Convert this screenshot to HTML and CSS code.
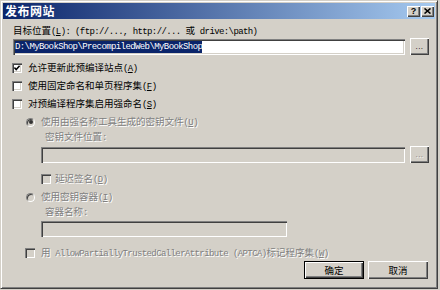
FILE: index.html
```html
<!DOCTYPE html>
<html lang="zh-CN">
<head>
<meta charset="utf-8">
<title>发布网站</title>
<link rel="stylesheet" href="styles.css">
</head>
<body>
<div class="window">
  <div class="titlebar">
    <span class="title">发布网站</span>
    <div class="tbtns">
      <span class="tbtn q">?</span>
      <span class="tbtn"><svg width="7" height="6" viewBox="0 0 7 6"><path d="M0.5 0.5 L6.5 5.5 M6.5 0.5 L0.5 5.5" stroke="#000" stroke-width="1.6" fill="none"/></svg></span>
    </div>
  </div>
  <div class="content">
    <div class="lbl">目标位置<span class="en">(<u>L</u>): (ftp://..., http://... </span>或<span class="en"> drive:\path)</span></div>
    <div class="frow">
      <div class="field"><span class="sel en">D:\MyBookShop\PrecompiledWeb\MyBookShop</span></div>
      <span class="dots">...</span>
    </div>
    <div class="chk">
      <span class="cb"><svg width="6" height="6" viewBox="0 0 6 6"><path d="M0.4 2.6 L2.2 4.6 L5.6 0.8" stroke="#000" stroke-width="1.5" fill="none"/></svg></span>
      <span>允许更新此预编译站点<span class="en">(<u>A</u>)</span></span>
    </div>
    <div class="chk">
      <span class="cb"></span>
      <span>使用固定命名和单页程序集<span class="en">(<u>F</u>)</span></span>
    </div>
    <div class="chk">
      <span class="cb"></span>
      <span>对预编译程序集启用强命名<span class="en">(<u>S</u>)</span></span>
    </div>
    <div class="chk radio-row">
      <span class="rb on"></span>
      <span class="dis">使用由强名称工具生成的密钥文件<span class="en">(<u>U</u>)</span></span>
    </div>
    <div class="sub dis">密钥文件位置<span class="en">:</span></div>
    <div class="frow indent">
      <div class="field off"></div>
      <span class="dots off">...</span>
    </div>
    <div class="chk delay">
      <span class="cb off"></span>
      <span class="dis">延迟签名<span class="en">(<u>D</u>)</span></span>
    </div>
    <div class="chk radio-row">
      <span class="rb"></span>
      <span class="dis">使用密钥容器<span class="en">(<u>I</u>)</span></span>
    </div>
    <div class="sub short dis">容器名称<span class="en">:</span></div>
    <div class="field off short-field"></div>
    <div class="chk last">
      <span class="cb off"></span>
      <span class="dis">用<span class="en"> AllowPartiallyTrustedCallerAttribute (APTCA)</span>标记程序集<span class="en">(<u>W</u>)</span></span>
    </div>
    <div class="actions">
      <span class="btn default">确定</span>
      <span class="btn">取消</span>
    </div>
  </div>
</div>
</body>
</html>
```
FILE: styles.css
```css
* { box-sizing: border-box; }
html, body { margin: 0; padding: 0; }
body {
  width: 440px;
  height: 290px;
  overflow: hidden;
  background: #d4d0c8;
  font-family: "Noto Sans CJK SC", "Noto Sans CJK JP", sans-serif;
  font-size: 9.5px;
  color: #000;
}
.window {
  width: 438px;
  height: 289px;
  background: #d4d0c8;
  border: 1px solid;
  border-color: #d4d0c8 #404040 #404040 #d4d0c8;
  box-shadow: inset 1px 1px #fff, inset -1px -1px #808080;
  padding: 2px;
  display: flex;
  flex-direction: column;
}
.titlebar {
  height: 16px;
  flex: none;
  display: flex;
  align-items: center;
  padding: 0 1px 0 2px;
  background: linear-gradient(to right, #0a246a, #a6caf0);
}
.title {
  color: #fff;
  font-weight: bold;
  font-size: 12px;
  letter-spacing: 0.5px;
  line-height: 16px;
}
.tbtns {
  margin-left: auto;
  display: flex;
  gap: 1px;
}
.tbtn {
  width: 13px;
  height: 11px;
  background: #d4d0c8;
  box-shadow: inset 1px 1px #fff, inset -1px -1px #404040, inset -2px -2px #808080;
  display: flex;
  align-items: center;
  justify-content: center;
}
.tbtn.q {
  font-family: "Liberation Sans", sans-serif;
  font-weight: bold;
  font-size: 9px;
  line-height: 11px;
}
.content {
  flex: 1;
  padding: 5px 6px 0 10px;
  display: flex;
  flex-direction: column;
}
.en {
  font-family: "Liberation Mono", monospace;
  font-size: 9px;
  letter-spacing: -0.6px;
}
u { text-decoration: underline; text-underline-offset: 1px; }
.lbl {
  height: 12px;
  line-height: 12px;
  white-space: nowrap;
}
.frow {
  display: flex;
  align-items: flex-end;
  gap: 5px;
  height: 17px;
  margin-top: 2px;
}
.frow.indent {
  margin-top: 4px;
  padding-left: 28px;
}
.field {
  flex: 1;
  height: 16px;
  background: #fff;
  padding: 2px 2px;
  box-shadow: inset 1px 1px #808080, inset 2px 2px #404040, inset -1px -1px #fff, inset -2px -2px #d4d0c8;
  display: flex;
  align-items: center;
  overflow: hidden;
}
.field.off { background: #d4d0c8; }
.sel {
  background: #0a246a;
  color: #fff;
  height: 12px;
  line-height: 12px;
  white-space: nowrap;
}
.dots {
  flex: none;
  width: 19px;
  height: 17px;
  background: #d4d0c8;
  box-shadow: inset 1px 1px #fff, inset -1px -1px #404040, inset -2px -2px #808080;
  font-family: "Liberation Sans", sans-serif;
  font-size: 8px;
  line-height: 18px;
  text-align: center;
  letter-spacing: 0.5px;
}
.dots.off {
  color: #808080;
  text-shadow: 1px 1px #fff;
}
.chk {
  height: 18px;
  display: flex;
  align-items: center;
  gap: 6px;
  white-space: nowrap;
  line-height: 12px;
}
.frow + .chk { margin-top: 4px; }
.cb {
  flex: none;
  width: 10px;
  height: 10px;
  margin-left: -1px;
  background: #fff;
  box-shadow: inset 1px 1px #808080, inset 2px 2px #404040, inset -1px -1px #fff, inset -2px -2px #d4d0c8;
  display: flex;
  align-items: center;
  justify-content: center;
}
.cb.off { background: #d4d0c8; }
.radio-row { padding-left: 13px; }
.rb {
  flex: none;
  width: 9px;
  height: 9px;
  border-radius: 50%;
  border: 1px solid;
  border-color: #808080 #fff #fff #808080;
  background: #d4d0c8;
  box-shadow: inset 1px 1px #404040;
  display: flex;
  align-items: center;
  justify-content: center;
}
.rb.on::after {
  content: "";
  width: 4px;
  height: 4px;
  border-radius: 50%;
  background: #333;
}
.dis {
  color: #808080;
  text-shadow: 1px 1px #fff;
}
.sub {
  height: 11px;
  line-height: 11px;
  padding-left: 32px;
  white-space: nowrap;
}
.sub.short { height: 10px; line-height: 10px; }
.frow.indent + .chk.delay { margin-top: 7px; }
.chk.delay { padding-left: 29px; gap: 4px; }
.short-field {
  flex: none;
  width: 246px;
  margin-left: 28px;
  margin-top: 5px;
}
.chk.last {
  height: 14px;
  margin-top: 9px;
  padding-left: 13px;
}
.actions {
  display: flex;
  justify-content: flex-end;
  gap: 4px;
  margin-top: 1px;
  padding-right: 1px;
}
.btn {
  width: 60px;
  height: 18px;
  background: #d4d0c8;
  box-shadow: inset 1px 1px #fff, inset -1px -1px #404040, inset -2px -2px #808080;
  display: flex;
  align-items: center;
  justify-content: center;
  line-height: 12px;
}
.btn.default {
  border: 1px solid #000;
}
```
